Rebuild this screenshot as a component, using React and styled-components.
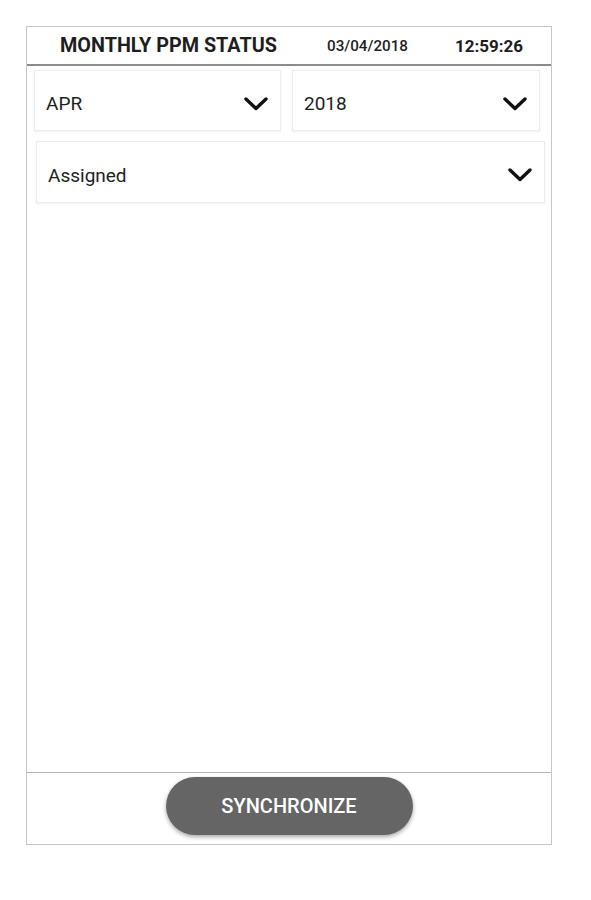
import React, { useState } from "react";
import styled, { createGlobalStyle } from "styled-components";

const GlobalStyle = createGlobalStyle`
  body {
    margin: 0;
    background: #ffffff;
    font-family: Roboto, "Liberation Sans", sans-serif;
  }
`;

const Frame = styled.div`
  box-sizing: border-box;
  margin: 26px 0 0 26px;
  width: 526px;
  height: 819px;
  border: 1px solid #c6c6c6;
  display: flex;
  flex-direction: column;
`;

const Header = styled.div`
  height: 37px;
  border-bottom: 2px solid #8c8c8c;
  display: flex;
  align-items: center;
  padding: 0 28px 0 33px;
  color: #1e1e1e;
`;

const Title = styled.span`
  font-size: 19.8px;
  font-weight: 700;
  width: 267px;
`;

const DateText = styled.span`
  font-size: 15.2px;
  font-weight: 500;
  width: 127px;
`;

const TimeText = styled.span`
  font-size: 17px;
  font-weight: 700;
  margin-left: auto;
`;

const Content = styled.div`
  flex: 1;
  display: flex;
  flex-direction: column;
  gap: 10px;
  padding: 4px 6px 0 7px;
`;

const SelectRow = styled.div`
  display: grid;
  grid-template-columns: 247px 248px;
  gap: 11px;
`;

const SelectBox = styled.div`
  box-sizing: border-box;
  height: ${(p) => p.$height || 61}px;
  margin: ${(p) => p.$margin || "0"};
  border: 1px solid #ececec;
  box-shadow: 0 1px 2px rgba(0, 0, 0, 0.06);
  display: flex;
  align-items: center;
  justify-content: space-between;
  padding: 6px ${(p) => p.$padRight || 12}px 0 11px;
  font-size: 19px;
  color: #1e1e1e;
  cursor: pointer;
`;

const Footer = styled.div`
  height: 72px;
  border-top: 1px solid #b5b5b5;
  display: flex;
  justify-content: center;
  padding-top: 4px;
  box-sizing: border-box;
`;

const SyncButton = styled.button`
  width: 247px;
  height: 58px;
  border: none;
  border-radius: 29px;
  background: #656565;
  color: #ffffff;
  font-family: Roboto, "Liberation Sans", sans-serif;
  font-size: 20px;
  font-weight: 500;
  box-shadow: 0 2px 4px rgba(0, 0, 0, 0.35);
  cursor: pointer;
`;

function Chevron() {
  return (
    <svg width="24" height="14" viewBox="0 0 24 14">
      <polyline
        points="2,2 12,11.5 22,2"
        fill="none"
        stroke="#111"
        strokeWidth="3.4"
        strokeLinecap="round"
        strokeLinejoin="round"
      />
    </svg>
  );
}

function Select({ value, ...rest }) {
  return (
    <SelectBox {...rest}>
      <span>{value}</span>
      <Chevron />
    </SelectBox>
  );
}

export default function App() {
  const [month] = useState("APR");
  const [year] = useState("2018");
  const [status] = useState("Assigned");

  return (
    <>
      <GlobalStyle />
      <Frame>
        <Header>
          <Title>MONTHLY PPM STATUS</Title>
          <DateText>03/04/2018</DateText>
          <TimeText>12:59:26</TimeText>
        </Header>
        <Content>
          <SelectRow>
            <Select value={month} />
            <Select value={year} />
          </SelectRow>
          <Select value={status} $height={62} $margin="0 0 0 2px" $padRight={12} />
        </Content>
        <Footer>
          <SyncButton>SYNCHRONIZE</SyncButton>
        </Footer>
      </Frame>
    </>
  );
}
